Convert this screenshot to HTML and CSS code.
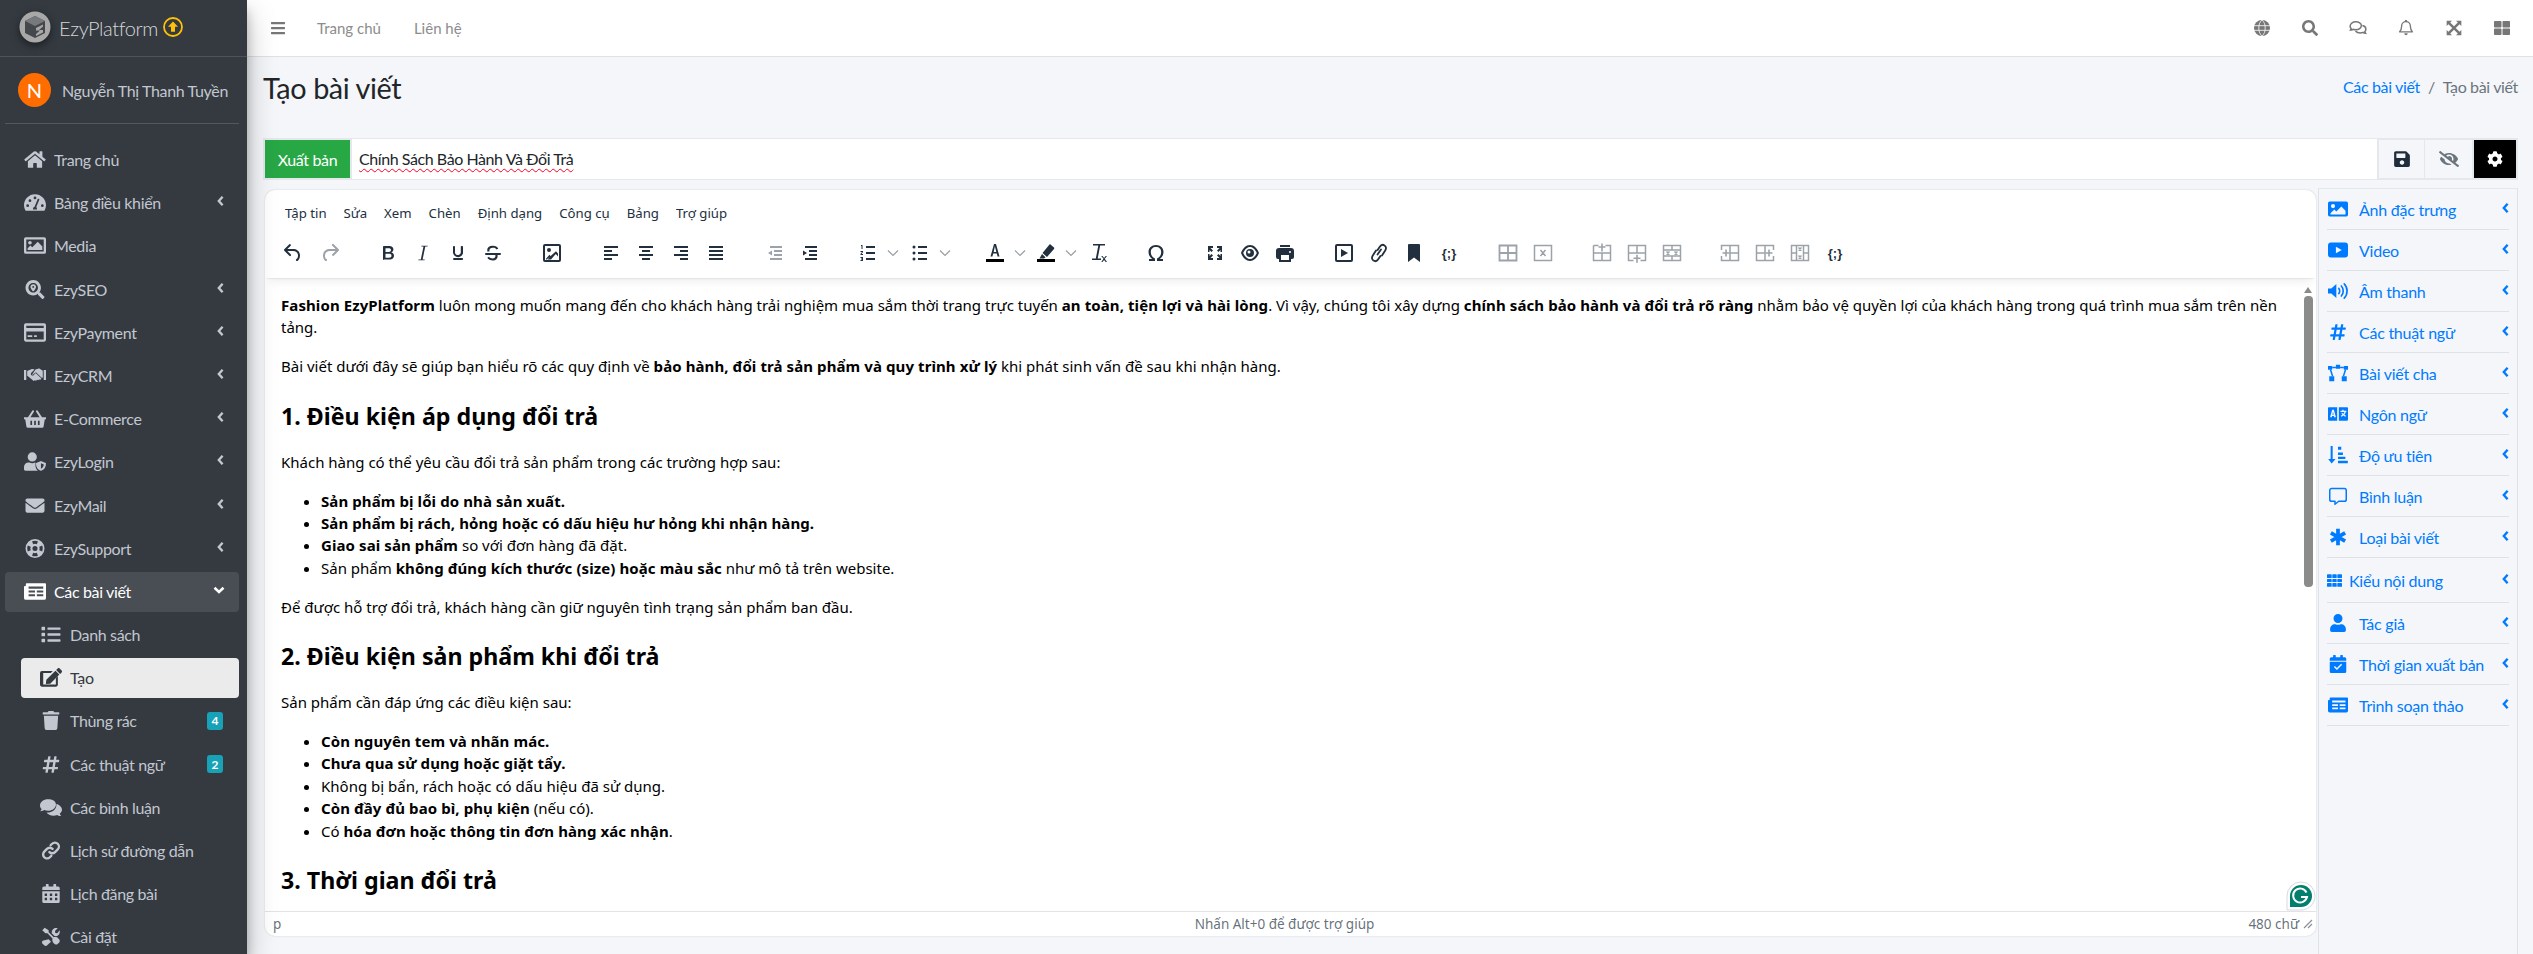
FILE: index.html
```html
<!DOCTYPE html>
<html lang="vi">
<head>
<meta charset="utf-8">
<title>Tạo bài viết</title>
<link rel="stylesheet" href="styles.css">
</head>
<body>
<svg class="sprite" xmlns="http://www.w3.org/2000/svg">
<symbol id="home" viewBox="0 0 576 512"><path d="M280.37 148.26L96 300.11V464a16 16 0 0 0 16 16l112.06-.29a16 16 0 0 0 15.92-16V368a16 16 0 0 1 16-16h64a16 16 0 0 1 16 16v95.64a16 16 0 0 0 16 16.05L464 480a16 16 0 0 0 16-16V300L295.67 148.26a12.19 12.19 0 0 0-15.3 0zM571.6 251.47L488 182.56V44.05a12 12 0 0 0-12-12h-56a12 12 0 0 0-12 12v72.61L318.47 43a48 48 0 0 0-61 0L4.34 251.47a12 12 0 0 0-1.6 16.9l25.5 31A12 12 0 0 0 45.15 301l235.22-193.74a12.19 12.19 0 0 1 15.3 0L530.9 301a12 12 0 0 0 16.9-1.6l25.5-31a12 12 0 0 0-1.7-16.93z"/></symbol>
<symbol id="search" viewBox="0 0 512 512"><path d="M505 442.7L405.3 343c-4.5-4.5-10.6-7-17-7H372c27.6-35.3 44-79.7 44-128C416 93.1 322.9 0 208 0S0 93.1 0 208s93.1 208 208 208c48.3 0 92.7-16.4 128-44v16.3c0 6.4 2.5 12.5 7 17l99.7 99.7c9.4 9.4 24.6 9.4 33.9 0l28.3-28.3c9.4-9.4 9.4-24.6.1-34zM208 336c-70.7 0-128-57.2-128-128 0-70.7 57.2-128 128-128 70.7 0 128 57.2 128 128 0 70.7-57.2 128-128 128z"/></symbol>
<symbol id="searchloc" viewBox="0 0 512 512"><path d="M505 442.7L405.3 343c-4.5-4.5-10.6-7-17-7H372c27.6-35.3 44-79.7 44-128C416 93.1 322.9 0 208 0S0 93.1 0 208s93.1 208 208 208c48.3 0 92.7-16.4 128-44v16.3c0 6.4 2.5 12.5 7 17l99.7 99.7c9.4 9.4 24.6 9.4 33.9 0l28.3-28.3c9.4-9.4 9.4-24.6.1-34zM208 336c-70.7 0-128-57.2-128-128 0-70.7 57.2-128 128-128 70.7 0 128 57.2 128 128 0 70.7-57.2 128-128 128z"/><path d="M208 112c-42 0-76 33-76 74 0 34 46 92 66 116 5 6 15 6 20 0 20-24 66-82 66-116 0-41-34-74-76-74zm0 100a26 26 0 1 1 0-52 26 26 0 0 1 0 52z"/></symbol>
<symbol id="envelope" viewBox="0 0 512 512"><path d="M502.3 190.8c3.9-3.1 9.7-.2 9.7 4.7V400c0 26.5-21.5 48-48 48H48c-26.5 0-48-21.5-48-48V195.6c0-5 5.7-7.8 9.7-4.7 22.4 17.4 52.1 39.5 154.1 113.6 21.1 15.4 56.7 47.8 92.2 47.6 35.7.3 72-32.8 92.3-47.6 102-74.1 131.6-96.3 154-113.7zM256 320c23.2.4 56.6-29.2 73.4-41.4 132.7-96.3 142.8-104.7 173.4-128.7 5.8-4.5 9.2-11.5 9.2-18.9v-19c0-26.5-21.5-48-48-48H48C21.5 64 0 85.5 0 112v19c0 7.4 3.4 14.3 9.2 18.9 30.6 23.9 40.7 32.4 173.4 128.7 16.8 12.2 50.2 41.8 73.4 41.4z"/></symbol>
<symbol id="hash" viewBox="0 0 448 512"><path d="M440.667 182.109l7.143-40c1.313-7.355-4.342-14.109-11.813-14.109h-74.81l14.623-81.891C377.123 38.754 371.468 32 363.997 32h-40.632a12 12 0 0 0-11.813 9.891L296.175 128H197.54l14.623-81.891C213.477 38.754 207.822 32 200.35 32h-40.632a12 12 0 0 0-11.813 9.891L132.528 128H53.432a12 12 0 0 0-11.813 9.891l-7.143 40C33.163 185.246 38.818 192 46.289 192h74.81L98.242 320H19.146a12 12 0 0 0-11.813 9.891l-7.143 40C-1.123 377.246 4.532 384 12.003 384h74.81L72.19 465.891C70.877 473.246 76.532 480 84.003 480h40.632a12 12 0 0 0 11.813-9.891L151.826 384h98.634l-14.623 81.891C234.523 473.246 240.178 480 247.65 480h40.632a12 12 0 0 0 11.813-9.891L315.472 384h79.096a12 12 0 0 0 11.813-9.891l7.143-40c1.313-7.355-4.342-14.109-11.813-14.109h-74.81l22.857-128h79.096a12 12 0 0 0 11.813-9.891zM261.889 320h-98.634l22.857-128h98.634l-22.857 128z"/></symbol>
<symbol id="user" viewBox="0 0 448 512"><path d="M224 256c70.7 0 128-57.3 128-128S294.7 0 224 0 96 57.3 96 128s57.3 128 128 128zm89.6 32h-16.7c-22.2 10.2-46.9 16-72.9 16s-50.6-5.8-72.9-16h-16.7C60.2 288 0 348.2 0 422.4V464c0 26.5 21.5 48 48 48h352c26.5 0 48-21.5 48-48v-41.6c0-74.2-60.2-134.4-134.4-134.4z"/></symbol>
<symbol id="trash" viewBox="0 0 448 512"><path d="M432 32H312l-9.4-18.7A24 24 0 0 0 281.1 0H166.8a23.72 23.72 0 0 0-21.4 13.3L136 32H16A16 16 0 0 0 0 48v32a16 16 0 0 0 16 16h416a16 16 0 0 0 16-16V48a16 16 0 0 0-16-16zM53.2 467a48 48 0 0 0 47.9 45h245.8a48 48 0 0 0 47.9-45L416 128H32z"/></symbol>
<symbol id="list" viewBox="0 0 512 512"><path d="M80 368H16a16 16 0 0 0-16 16v64a16 16 0 0 0 16 16h64a16 16 0 0 0 16-16v-64a16 16 0 0 0-16-16zm0-320H16A16 16 0 0 0 0 64v64a16 16 0 0 0 16 16h64a16 16 0 0 0 16-16V64a16 16 0 0 0-16-16zm0 160H16a16 16 0 0 0-16 16v64a16 16 0 0 0 16 16h64a16 16 0 0 0 16-16v-64a16 16 0 0 0-16-16zm416 176H176a16 16 0 0 0-16 16v32a16 16 0 0 0 16 16h320a16 16 0 0 0 16-16v-32a16 16 0 0 0-16-16zm0-320H176a16 16 0 0 0-16 16v32a16 16 0 0 0 16 16h320a16 16 0 0 0 16-16V80a16 16 0 0 0-16-16zm0 160H176a16 16 0 0 0-16 16v32a16 16 0 0 0 16 16h320a16 16 0 0 0 16-16v-32a16 16 0 0 0-16-16z"/></symbol>
<symbol id="thlarge" viewBox="0 0 512 512"><path d="M296 32h192c13.255 0 24 10.745 24 24v160c0 13.255-10.745 24-24 24H296c-13.255 0-24-10.745-24-24V56c0-13.255 10.745-24 24-24zm-80 0H24C10.745 32 0 42.745 0 56v160c0 13.255 10.745 24 24 24h192c13.255 0 24-10.745 24-24V56c0-13.255-10.745-24-24-24zM0 296v160c0 13.255 10.745 24 24 24h192c13.255 0 24-10.745 24-24V296c0-13.255-10.745-24-24-24H24c-13.255 0-24 10.745-24 24zm296 184h192c13.255 0 24-10.745 24-24V296c0-13.255-10.745-24-24-24H296c-13.255 0-24 10.745-24 24v160c0 13.255 10.745 24 24 24z"/></symbol>
<symbol id="bars" viewBox="0 0 448 512"><path d="M16 132h416c8.837 0 16-7.163 16-16V76c0-8.837-7.163-16-16-16H16C7.163 60 0 67.163 0 76v40c0 8.837 7.163 16 16 16zm0 160h416c8.837 0 16-7.163 16-16v-40c0-8.837-7.163-16-16-16H16c-8.837 0-16 7.163-16 16v40c0 8.837 7.163 16 16 16zm0 160h416c8.837 0 16-7.163 16-16v-40c0-8.837-7.163-16-16-16H16c-8.837 0-16 7.163-16 16v40c0 8.837 7.163 16 16 16z"/></symbol>
<symbol id="save" viewBox="0 0 448 512"><path d="M433.941 129.941l-83.882-83.882A48 48 0 0 0 316.118 32H48C21.49 32 0 53.49 0 80v352c0 26.51 21.49 48 48 48h352c26.51 0 48-21.49 48-48V163.882a48 48 0 0 0-14.059-33.941zM224 416c-35.346 0-64-28.654-64-64 0-35.346 28.654-64 64-64s64 28.654 64 64c0 35.346-28.654 64-64 64zm96-304.52V212c0 6.627-5.373 12-12 12H76c-6.627 0-12-5.373-12-12V108c0-6.627 5.373-12 12-12h228.52c3.183 0 6.235 1.264 8.485 3.515l3.48 3.48A11.996 11.996 0 0 1 320 111.48z"/></symbol>
<symbol id="cog" viewBox="0 0 512 512"><path d="M487.4 315.7l-42.6-24.6c4.3-23.2 4.3-47 0-70.2l42.6-24.6c4.9-2.8 7.1-8.6 5.5-14-11.1-35.6-30-67.8-54.7-94.6-3.8-4.1-10-5.1-14.8-2.3L380.8 110c-17.9-15.4-38.5-27.3-60.8-35.1V25.8c0-5.6-3.9-10.5-9.4-11.7-36.7-8.2-74.3-7.8-109.2 0-5.5 1.2-9.4 6.1-9.4 11.7V75c-22.2 7.9-42.8 19.8-60.8 35.1L88.7 85.5c-4.9-2.8-11-1.9-14.8 2.3-24.7 26.7-43.6 58.9-54.7 94.6-1.7 5.4.6 11.2 5.5 14L67.3 221c-4.3 23.2-4.3 47 0 70.2l-42.6 24.6c-4.9 2.8-7.1 8.6-5.5 14 11.1 35.6 30 67.8 54.7 94.6 3.8 4.1 10 5.1 14.8 2.3l42.6-24.6c17.9 15.4 38.5 27.3 60.8 35.1v49.2c0 5.6 3.9 10.5 9.4 11.7 36.7 8.2 74.3 7.8 109.2 0 5.5-1.2 9.4-6.1 9.4-11.7v-49.2c22.2-7.9 42.8-19.8 60.8-35.1l42.6 24.6c4.9 2.8 11 1.9 14.8-2.3 24.7-26.7 43.6-58.9 54.7-94.6 1.5-5.5-.7-11.3-5.6-14.1zM256 336c-44.1 0-80-35.9-80-80s35.9-80 80-80 80 35.9 80 80-35.9 80-80 80z"/></symbol>
<symbol id="eyeslash" viewBox="0 0 640 512"><path d="M320 400c-75.85 0-137.25-58.71-142.9-133.11L72.2 185.82c-13.79 17.3-26.48 35.59-36.72 55.59a32.35 32.35 0 0 0 0 29.19C89.71 376.41 197.07 448 320 448c26.91 0 52.87-4 77.89-10.46L346 397.39a144.13 144.13 0 0 1-26 2.61zm313.82 58.1l-110.55-85.44a331.25 331.25 0 0 0 81.25-102.07 32.35 32.35 0 0 0 0-29.19C550.29 135.59 442.93 64 320 64a308.15 308.15 0 0 0-147.32 37.7L45.46 3.37A16 16 0 0 0 23 6.18L3.37 31.45A16 16 0 0 0 6.18 53.9l588.36 454.73a16 16 0 0 0 22.46-2.81l19.64-25.27a16 16 0 0 0-2.82-22.45zm-183.72-142l-39.3-30.38A94.75 94.75 0 0 0 416 256a94.76 94.76 0 0 0-121.31-92.21A47.65 47.65 0 0 1 304 192a46.64 46.64 0 0 1-1.54 10l-73.61-56.89A142.31 142.31 0 0 1 320 112a143.92 143.92 0 0 1 144 144c0 21.63-5.29 41.79-13.9 60.11z"/></symbol>
<symbol id="gauge" viewBox="0 0 24 20"><path fill-rule="evenodd" d="M12 1C5.4 1 0 6.4 0 13c0 2 .5 3.800 1.400 5.400.3.400.8.600 1.300.600h18.600c.5 0 1-.2 1.300-.6C23.500 16.800 24 15 24 13c0-6.600-5.400-12-12-12zM12 3.500a1.500 1.500 0 1 1 0 3 1.500 1.500 0 0 1 0-3zM4 15a1.500 1.500 0 1 1 0-3 1.500 1.500 0 0 1 0 3zm2.500-5.500a1.500 1.500 0 1 1 0-3 1.500 1.500 0 0 1 0 3zM14.200 17.500H9.800a2.500 2.500 0 0 1 1.700-3L15 6.200c.3-.7 2 0 1.700.7l-3.300 8c.5.500.8 1.500.8 2.600zM20 15a1.500 1.500 0 1 1 0-3 1.500 1.500 0 0 1 0 3z"/></symbol>
<symbol id="media" viewBox="0 0 24 20"><path fill-rule="evenodd" d="M2 1h20a2 2 0 0 1 2 2v14a2 2 0 0 1-2 2H2a2 2 0 0 1-2-2V3a2 2 0 0 1 2-2zm.5 2.500v13h19v-13zM6.500 5a2 2 0 1 1 0 4 2 2 0 0 1 0-4zM4 15v-2l3-3 2 2 6-6 5 5v4z"/></symbol>
<symbol id="imagesolid" viewBox="0 0 24 20"><path fill-rule="evenodd" d="M2 1h20a2 2 0 0 1 2 2v14a2 2 0 0 1-2 2H2a2 2 0 0 1-2-2V3a2 2 0 0 1 2-2zM6 4a2.500 2.500 0 1 0 0 5 2.500 2.500 0 0 0 0-5zM3 16.500h18V12l-5-5-6 6-2.500-2.500L3 15z"/></symbol>
<symbol id="card" viewBox="0 0 24 20"><path fill-rule="evenodd" d="M2 0h20a2 2 0 0 1 2 2v16a2 2 0 0 1-2 2H2a2 2 0 0 1-2-2V2a2 2 0 0 1 2-2zm.5 2.500V5h19V2.500zm0 6.500v8.500h19V9zM4 13h5v2H4zm7 0h3v2h-3z"/></symbol>
<symbol id="handshake" viewBox="0 0 24 18"><path d="M0 3h2.500v11H0zM21.500 3H24v11h-2.500zM3.500 4l5-2c1-.4 2 0 3 .5L8 6c-.7.8-.6 2 .2 2.600.8.600 1.900.5 2.500-.2l2-2 6.300 6-1.500 1.500-1-.8-.8 1.200-1.500-.8-1 1.200-1.600-.6-1 .9L4 9.500H3.500zM12.500 2.500l2.800-1c.8-.2 1.600 0 2.200.4l3 2v7.600h-1.200L13 5.500l-3.500 2.800c-.4.300-.8 0-.6-.4z"/></symbol>
<symbol id="basket" viewBox="0 0 24 20"><path fill-rule="evenodd" d="M0 8.500h4.300L9 1.500c.4-.5 1-.6 1.500-.3.500.4.600 1 .3 1.500L7 8.500h10l-3.800-5.800c-.3-.5-.2-1.100.3-1.500.5-.3 1.100-.2 1.500.3l4.700 7H24V10a1 1 0 0 1-1 1h-.4l-1.200 7.700a1.500 1.500 0 0 1-1.500 1.300H4.100a1.500 1.500 0 0 1-1.500-1.300L1.400 11H1a1 1 0 0 1-1-1zM7 12.500v4.500h1.800v-4.500zm4.100 0v4.500h1.800v-4.500zm4.100 0v4.500H17v-4.500z"/></symbol>
<symbol id="usershield" viewBox="0 0 24 20"><path d="M9 0a5 5 0 1 1 0 10A5 5 0 0 1 9 0zM1.500 20c-.8 0-1.500-.7-1.500-1.500V16c0-2.800 2.200-5 5-5h.8c1 .5 2.100.8 3.200.8s2.200-.3 3.200-.8h.3v3c0 2.500 1 4.500 2.600 6z"/><path fill-rule="evenodd" d="M18.500 9.500l5.200 2.100c.2.100.3.300.3.500 0 3.800-2 7-5.300 8-.1 0-.3 0-.4 0-3.300-1-5.300-4.200-5.300-8 0-.2.100-.4.300-.5zm0 2.500v6c1.800-.8 3-2.700 3.100-4.700z"/></symbol>
<symbol id="lifering" viewBox="0 0 24 24"><path fill-rule="evenodd" d="M12 0a12 12 0 1 1 0 24A12 12 0 0 1 12 0zM8.300 2.800l1.400 3.800a5.500 5.500 0 0 1 4.600 0l1.400-3.800a10 10 0 0 0-7.400 0zM2.800 8.300a10 10 0 0 0 0 7.400l3.800-1.400a5.500 5.500 0 0 1 0-4.600zM21.200 8.300l-3.800 1.400a5.500 5.500 0 0 1 0 4.600l3.800 1.400a10 10 0 0 0 0-7.400zM9.700 17.400l-1.400 3.800a10 10 0 0 0 7.400 0l-1.400-3.800a5.500 5.500 0 0 1-4.600 0zM12 8.800a3.200 3.200 0 1 0 0 6.400 3.200 3.200 0 0 0 0-6.400z"/></symbol>
<symbol id="newspaper" viewBox="0 0 24 18"><path fill-rule="evenodd" d="M3 0h20a1 1 0 0 1 1 1v15a2 2 0 0 1-2 2H2a2 2 0 0 1-2-2V4a1 1 0 0 1 1-1h1V1a1 1 0 0 1 1-1zM5 3.500V6h16V3.500zM5 8v2.200h7V8zm9 0v2.200h7V8zM5 12v2.200h7V12zm9 0v2.200h7V12z"/></symbol>
<symbol id="edit" viewBox="0 0 24 20"><path d="M16.800 2.500l4.300 4.300-9.900 9.900-4.800.5.500-4.800zM22 .8l1.600 1.600c.6.600.6 1.500 0 2.100l-1.700 1.700-4.300-4.300L19.300.2c.6-.6 1.500-.6 2.100 0z"/><path d="M2 3h12l-2.200 2.200H3.500V17.500h13.800v-7l2.200-2.200V18a2 2 0 0 1-2 2H2a2 2 0 0 1-2-2V5a2 2 0 0 1 2-2z"/></symbol>
<symbol id="comments" viewBox="0 0 24 20"><path d="M8.700 1C3.900 1 0 4 0 7.700c0 1.500.6 2.800 1.700 3.900-.5 1.400-1.600 2.500-1.600 2.500 2 .1 3.600-.7 4.400-1.300 1.300.5 2.700.8 4.200.8 4.800 0 8.700-3 8.700-6.900S13.500 1 8.700 1z"/><path d="M22.300 16.500c1-1 1.700-2.300 1.700-3.800 0-2.800-2.700-5.200-6.200-6.100 0 .4.100.7.100 1.100 0 4.700-4.500 8.300-9.800 8.300h-1c1.400 2 4.300 3.400 7.500 3.400 1.500 0 2.900-.3 4.200-.8.800.6 2.400 1.400 4.400 1.300 0 0-1.100-1.100-1.600-2.500z" transform="translate(0 -.5)"/></symbol>
<symbol id="commentsline" viewBox="0 0 24 20"><path fill="none" stroke="currentColor" stroke-width="2" d="M9 1.800C4.900 1.800 1.500 4.300 1.500 7.500c0 1.300.6 2.500 1.500 3.400-.3.900-1 1.800-1 1.800 1.400 0 2.600-.5 3.300-1 1.200.5 2.400.7 3.700.7 4.100 0 7.500-2.500 7.500-5.600S13.100 1.800 9 1.800z"/><path fill="none" stroke="currentColor" stroke-width="2" d="M17.900 6.800c2.700.6 4.600 2.600 4.600 4.900 0 1.300-.6 2.500-1.500 3.400.3.900 1 1.800 1 1.800-1.400 0-2.600-.5-3.300-1-1.200.5-2.400.7-3.700.7-2.700 0-5-1-6.300-2.700"/></symbol>
<symbol id="link" viewBox="0 0 24 24"><path fill="none" stroke="currentColor" stroke-width="3" stroke-linecap="round" d="M10 14a5 5 0 0 0 7.100 0l3.400-3.400a5 5 0 0 0-7.100-7.100L11.500 5.400M14 10a5 5 0 0 0-7.100 0l-3.400 3.400a5 5 0 0 0 7.100 7.100l1.900-1.900"/></symbol>
<symbol id="calendar" viewBox="0 0 22 24"><path fill-rule="evenodd" d="M0 9h22v13a2 2 0 0 1-2 2H2a2 2 0 0 1-2-2zm3 3v3h3v-3zm6.500 0v3h3v-3zM16 12v3h3v-3zM3 17.500v3h3v-3zm6.500 0v3h3v-3zm6.500 0v3h3v-3z"/><path d="M5 0h2.500a.5.500 0 0 1 .5.500V3h6V.5a.5.500 0 0 1 .5-.5H17a.5.500 0 0 1 .5.500V3H20a2 2 0 0 1 2 2v2.500H0V5a2 2 0 0 1 2-2h2.500V.5A.5.500 0 0 1 5 0z"/></symbol>
<symbol id="calcheck" viewBox="0 0 22 24"><path fill-rule="evenodd" d="M0 9h22v13a2 2 0 0 1-2 2H2a2 2 0 0 1-2-2zm16.500 4l-1.400-1.400-5.600 5.600-2.600-2.600L5.500 16l4 4z"/><path d="M5 0h2.500a.5.500 0 0 1 .5.500V3h6V.5a.5.500 0 0 1 .5-.5H17a.5.500 0 0 1 .5.500V3H20a2 2 0 0 1 2 2v2.500H0V5a2 2 0 0 1 2-2h2.500V.5A.5.500 0 0 1 5 0z"/></symbol>
<symbol id="tools" viewBox="0 0 24 24"><path d="M1 4l3-3 5 3v2.500l6.500 6.500c2-.7 4.300-.2 5.800 1.400l1.400 1.800c.6 1 .5 2.400-.3 3.300l-2 2c-1 .9-2.400.9-3.300.3l-1.800-1.400c-1.500-1.500-2-3.800-1.400-5.800L7.500 8H5z"/><path d="M9 15.500l3 3-4.800 4.700c-1 1-2.800 1-3.800 0l-2-1.900c-1-1-1-2.700 0-3.800zM22.800 4c.7 2 .3 4.400-1.300 6-1.400 1.400-3.300 1.900-5.100 1.500L13 8c-.4-1.800.1-3.700 1.500-5.100 1.600-1.600 4-2 6-1.300L17 5l.5 2.500L20 8z"/></symbol>
<symbol id="globe" viewBox="0 0 24 24"><path d="M12 0a12 12 0 1 1 0 24 12 12 0 0 1 0-24z"/><path stroke="#fff" stroke-width="1.200" fill="none" d="M0 8.500h24M0 15.500h24M12 0c-3.500 3-4.800 7-4.800 12s1.300 9 4.800 12c3.500-3 4.800-7 4.800-12S15.500 3 12 0z"/></symbol>
<symbol id="bell" viewBox="0 0 22 24"><path fill="none" stroke="currentColor" stroke-width="2" stroke-linejoin="round" d="M11 2.500c-3.800 0-6.500 3-6.500 6.500 0 5-1.200 6.700-3.200 8.800h19.400c-2-2.100-3.200-3.800-3.200-8.800 0-3.500-2.700-6.500-6.500-6.500z"/><path d="M9.500 0h3v3h-3zM8.500 20h5c0 1.800-1 3-2.500 3s-2.500-1.200-2.500-3z"/></symbol>
<symbol id="expand" viewBox="0 0 24 24"><path d="M1 1h8L6.300 3.700 12 9.400l5.700-5.700L15 1h8v8l-2.700-2.700-5.700 5.700 5.700 5.700L23 15v8h-8l2.700-2.700-5.700-5.700-5.700 5.700L9 23H1v-8l2.700 2.700L9.400 12 3.700 6.300 1 9z"/></symbol>
<symbol id="youtube" viewBox="0 0 24 18"><path fill-rule="evenodd" d="M3.500 0h17A3.500 3.500 0 0 1 24 3.500v11a3.500 3.500 0 0 1-3.500 3.500h-17A3.500 3.500 0 0 1 0 14.500v-11A3.500 3.500 0 0 1 3.500 0zM9.500 5v8l7-4z"/></symbol>
<symbol id="volume" viewBox="0 0 24 20"><path d="M0 7h4l6-5.500v17L4 13H0z"/><path fill="none" stroke="currentColor" stroke-width="2" stroke-linecap="round" d="M13 7c1.300 1.500 1.300 4.500 0 6M16 4c3 3 3 9 0 12M19.500 1.500c4.500 4.500 4.500 12.500 0 17"/></symbol>
<symbol id="diagram" viewBox="0 0 24 20"><path d="M9.500 0h5v5h-5zM0 1.500h5v4.500H0zM19 1.500h5v4.500h-5zM1.500 14h6v6h-6zM16.500 14h6v6h-6z"/><path fill="none" stroke="currentColor" stroke-width="1.800" d="M5 3.500h4.500M14.500 3.500H19M3 6l2.500 8M21 6l-2.500 8"/></symbol>
<symbol id="language" viewBox="0 0 24 16"><path fill-rule="evenodd" d="M1 0h10v16H1a1 1 0 0 1-1-1V1a1 1 0 0 1 1-1zm4 3L2.500 12h2l.4-1.500h2.200L7.500 12h2L7 3zm.2 6L6 5.500 6.800 9zM13 0h10a1 1 0 0 1 1 1v14a1 1 0 0 1-1 1H13zm4.200 3v1.200H15v1.500h4.800c-.3 1-.9 1.800-1.400 2.300-.4-.4-.7-.8-.9-1.200h-1.500c.3.700.8 1.400 1.300 2-.6.400-1.200.7-1.900 1l.5 1.400c.9-.3 1.800-.8 2.600-1.400.7.600 1.600 1 2.500 1.400l.5-1.400c-.7-.2-1.400-.6-1.900-1 .9-.9 1.500-2 1.800-3.100H22V4.200h-3.300V3z"/></symbol>
<symbol id="sort" viewBox="0 0 24 22"><path d="M3 0h2.500v16H9l-4.700 5.500L0 16h3zM12 1h4v3.500h-4zM12 8h6v3h-6zM12 13h9v3h-9zM12 18h12v3H12z"/></symbol>
<symbol id="comment" viewBox="0 0 24 24"><path fill="none" stroke="currentColor" stroke-width="2" stroke-linejoin="round" d="M3.500 2h17A2.500 2.500 0 0 1 23 4.500v12a2.500 2.500 0 0 1-2.500 2.500H13l-5 4v-4H3.500A2.500 2.500 0 0 1 1 16.500v-12A2.500 2.500 0 0 1 3.500 2z"/></symbol>
<symbol id="asterisk" viewBox="0 0 24 24"><path fill="none" stroke="currentColor" stroke-width="5" d="M12 1v22M2.500 6.500l19 11M21.500 6.500l-19 11"/></symbol>
<symbol id="th" viewBox="0 0 24 24"><path d="M1 2h5.500a1 1 0 0 1 1 1v4a1 1 0 0 1-1 1H1a1 1 0 0 1-1-1V3a1 1 0 0 1 1-1zm8.500 0h5a1 1 0 0 1 1 1v4a1 1 0 0 1-1 1h-5a1 1 0 0 1-1-1V3a1 1 0 0 1 1-1zm8 0H23a1 1 0 0 1 1 1v4a1 1 0 0 1-1 1h-5.500a1 1 0 0 1-1-1V3a1 1 0 0 1 1-1zM1 9.500h5.500a1 1 0 0 1 1 1v3a1 1 0 0 1-1 1H1a1 1 0 0 1-1-1v-3a1 1 0 0 1 1-1zm8.500 0h5a1 1 0 0 1 1 1v3a1 1 0 0 1-1 1h-5a1 1 0 0 1-1-1v-3a1 1 0 0 1 1-1zm8 0H23a1 1 0 0 1 1 1v3a1 1 0 0 1-1 1h-5.500a1 1 0 0 1-1-1v-3a1 1 0 0 1 1-1zM1 16h5.500a1 1 0 0 1 1 1v4a1 1 0 0 1-1 1H1a1 1 0 0 1-1-1v-4a1 1 0 0 1 1-1zm8.500 0h5a1 1 0 0 1 1 1v4a1 1 0 0 1-1 1h-5a1 1 0 0 1-1-1v-4a1 1 0 0 1 1-1zm8 0H23a1 1 0 0 1 1 1v4a1 1 0 0 1-1 1h-5.500a1 1 0 0 1-1-1v-4a1 1 0 0 1 1-1z"/></symbol>
<symbol id="angleleft" viewBox="0 0 10 16"><path fill="none" stroke="currentColor" stroke-width="3.400" d="M8 2L2.600 8 8 14"/></symbol>
<symbol id="angledown" viewBox="0 0 16 10"><path fill="none" stroke="currentColor" stroke-width="3.400" d="M2 2l6 5.600L14 2"/></symbol>
<symbol id="t-undo" viewBox="0 0 24 24"><path d="M6.400 8H12c3.700 0 6.200 2 6.800 5.100.6 2.700-.4 5.600-2.300 6.800a1 1 0 0 1-1-1.800c1.100-.6 1.800-2.700 1.400-4.600-.5-2.100-2.100-3.500-4.900-3.500H6.400l3.300 3.300a1 1 0 1 1-1.400 1.400l-5-5a1 1 0 0 1 0-1.400l5-5a1 1 0 0 1 1.400 1.400L6.400 8z"/></symbol>
<symbol id="t-redo" viewBox="0 0 24 24"><path d="M17.600 10H12c-2.800 0-4.400 1.400-4.900 3.500-.4 2 .3 4 1.400 4.600a1 1 0 1 1-1 1.800c-2-1.200-2.900-4.100-2.300-6.800C5.800 10 8.300 8 12 8h5.600l-3.300-3.300a1 1 0 1 1 1.400-1.400l5 5a1 1 0 0 1 0 1.400l-5 5a1 1 0 0 1-1.400-1.400l3.300-3.300z"/></symbol>
<symbol id="t-bold" viewBox="0 0 24 24"><path fill-rule="evenodd" d="M7.800 19c-.3 0-.5 0-.6-.2l-.2-.5V5.700c0-.2 0-.4.200-.5l.6-.2h5c1.500 0 2.700.3 3.500 1 .7.600 1.100 1.400 1.100 2.500a3 3 0 0 1-.6 1.800c-.4.600-1 1-1.600 1.200.9.100 1.500.5 2 1.100.5.600.8 1.300.8 2.100 0 1.200-.4 2.100-1.200 2.800-.8.600-2 1-3.600 1H7.800zm4.700-8.100c1.700 0 2.500-.6 2.500-1.900 0-1.200-.8-1.800-2.500-1.800H9.500v3.700h3zm.4 5.900c1.800 0 2.600-.7 2.600-2 0-1.400-.9-2-2.600-2H9.500v4h3.400z"/></symbol>
<symbol id="t-italic" viewBox="0 0 24 24"><path d="M16.700 4.700l-.1.900h-2.300l-2.700 12.800h2.200l-.2.900H7.300l.2-.9h2.300l2.700-12.800h-2.200l.1-.9z"/></symbol>
<symbol id="t-under" viewBox="0 0 24 24"><path d="M16 5c.6 0 1 .4 1 1v5.500a4 4 0 0 1-.4 1.800l-1 1.400a5.300 5.300 0 0 1-5.500 1 4.500 4.500 0 0 1-2.500-2.400 4.300 4.300 0 0 1-.6-1.800V6c0-.6.400-1 1-1s1 .4 1 1v5.500c0 .3 0 .6.200 1a3 3 0 0 0 2.800 1.500c.4 0 .7 0 1-.2a3 3 0 0 0 1.800-2.300V6c0-.6.400-1 1-1zM8 17h8c.6 0 1 .4 1 1s-.4 1-1 1H8a1 1 0 0 1 0-2z"/></symbol>
<symbol id="t-strike" viewBox="0 0 24 24"><path d="M15.600 8.500c-.5-.7-1-1.100-1.300-1.300-.6-.4-1.300-.5-2.200-.5-2.700-.1-4.200 1.400-3.600 3.800H6.400c-.8-3.600 1.400-6 5.700-5.800 1.300 0 2.300.3 3.200.8.900.6 1.600 1.300 2 2l-1.700 1zM19 12a1 1 0 0 1 0 2h-2.500c.7 3.300-1.500 5.500-4.600 5.400-1.300 0-2.400-.2-3.300-.7a6 6 0 0 1-2.300-2l1.700-1c.3.500.8 1 1.500 1.300.6.300 1.300.4 2 .4 2.200 0 3.400-1.600 2.800-3.400H5a1 1 0 0 1 0-2z"/></symbol>
<symbol id="t-image" viewBox="0 0 24 24"><path fill-rule="evenodd" d="M5 3h14a2 2 0 0 1 2 2v14a2 2 0 0 1-2 2H5a2 2 0 0 1-2-2V5a2 2 0 0 1 2-2zm0 2v14h14V5zm4 2a2 2 0 1 1 0 4 2 2 0 0 1 0-4zm7 3.300l2 2.300v2.800l-2.200-2.500-4.800 5.600H6.700zm-6.500 3.400l1 1.200-3 3.500H6v-.6z"/></symbol>
<symbol id="t-al" viewBox="0 0 24 24"><path d="M5 5h14v2H5zM5 9h8v2H5zM5 13h14v2H5zM5 17h8v2H5z"/></symbol>
<symbol id="t-ac" viewBox="0 0 24 24"><path d="M5 5h14v2H5zM8 9h8v2H8zM5 13h14v2H5zM8 17h8v2H8z"/></symbol>
<symbol id="t-ar" viewBox="0 0 24 24"><path d="M5 5h14v2H5zM11 9h8v2h-8zM5 13h14v2H5zM11 17h8v2h-8z"/></symbol>
<symbol id="t-aj" viewBox="0 0 24 24"><path d="M5 5h14v2H5zM5 9h14v2H5zM5 13h14v2H5zM5 17h14v2H5z"/></symbol>
<symbol id="t-out" viewBox="0 0 24 24"><path d="M7 5h12v2H7zM11 9h8v2h-8zM11 13h8v2h-8zM7 17h12v2H7zM9 9.500v5L5 12z"/></symbol>
<symbol id="t-in" viewBox="0 0 24 24"><path d="M7 5h12v2H7zM11 9h8v2h-8zM11 13h8v2h-8zM7 17h12v2H7zM5 9.500v5L9 12z"/></symbol>
<symbol id="t-num" viewBox="0 0 24 24"><path d="M10 5h9v2h-9zM10 11h9v2h-9zM10 17h9v2h-9zM5 4h1.500v4H5.500V5H5zM4.500 10h2.500v1L5.500 13H7v1H4.500v-1L6 11H4.500zM4.500 16H7v4H4.500v-1H6v-.5H5v-.9h1V17H4.500z"/></symbol>
<symbol id="t-bul" viewBox="0 0 24 24"><path d="M10 5h9v2h-9zM10 11h9v2h-9zM10 17h9v2h-9z"/><circle cx="6" cy="6" r="1.500"/><circle cx="6" cy="12" r="1.500"/><circle cx="6" cy="18" r="1.500"/></symbol>
<symbol id="t-chev" viewBox="0 0 12 12"><path fill="none" stroke="currentColor" stroke-width="1.200" d="M1 3.500l5 5 5-5"/></symbol>
<symbol id="t-color" viewBox="0 0 24 24"><path d="M3 18h18v3H3z" fill="#000"/><path fill-rule="evenodd" d="M11 3h2l3.500 12.500h-1.900l-.8-3H10.200l-.8 3H7.500zm.9 2.200L10.700 11h2.600z"/></symbol>
<symbol id="t-high" viewBox="0 0 24 24"><path d="M3 18h18v3H3z" fill="#000"/><path d="M16.500 3.500l3.500 3c.4.400.4 1 0 1.400l-7 8.100-4.500-4 7-8.400c.4-.4 1-.5 1-.1zM8 13l3.500 3.200-1.400 1.300H5.500z"/></symbol>
<symbol id="t-clear" viewBox="0 0 24 24"><path d="M6 3h12v1.500h-4.800l-2.500 13H14V19H5v-1.500h3.800l2.500-13H6zM15.500 15l1.600 1.900L18.700 15H20l-2.300 2.800L20 21h-1.300l-1.600-2.100-1.600 2.100h-1.200l2.200-3.200L14.200 15z"/></symbol>
<symbol id="t-omega" viewBox="0 0 24 24"><path d="M12 4c4.500 0 7.500 3 7.500 7 0 3-1.500 5.500-3.800 7H19v2h-6v-2.500c2.500-1 4.200-3.500 4.200-6.500 0-3-2-5-5.200-5s-5.200 2-5.200 5c0 3 1.700 5.500 4.200 6.500V20H5v-2h3.300c-2.300-1.500-3.800-4-3.800-7 0-4 3-7 7.500-7z"/></symbol>
<symbol id="t-full" viewBox="0 0 24 24"><path d="M5 5h5v2H7.500l2.500 2.500L8.500 11 6.500 9v2H5zM19 5v6h-1.500V9l-2 2L14 9.500 16.500 7H14V5zM5 19v-6h1.500v2l2-2 1.500 1.500L7.500 17H10v2zM19 19h-5v-2h2.500L14 14.500l1.500-1.500 2 2v-2H19z"/></symbol>
<symbol id="t-prev" viewBox="0 0 24 24"><path fill-rule="evenodd" d="M12 4c4 0 7.300 3.500 9 8-1.700 4.500-5 8-9 8s-7.300-3.500-9-8c1.700-4.500 5-8 9-8zm0 2c-2.800 0-5.300 2.600-6.800 6 1.500 3.400 4 6 6.800 6s5.300-2.600 6.800-6c-1.500-3.400-4-6-6.800-6zm0 2a4 4 0 1 1 0 8 4 4 0 0 1 0-8zm-1 1.500a1.500 1.500 0 0 0 0 3 1.500 1.500 0 0 0 0-3z"/></symbol>
<symbol id="t-print" viewBox="0 0 24 24"><path fill-rule="evenodd" d="M7 4h10v2H7zM6 7h12a3 3 0 0 1 3 3v6a2 2 0 0 1-2 2h-1v3H6v-3H5a2 2 0 0 1-2-2v-6a3 3 0 0 1 3-3zm2 7v5h8v-5zm9-4a1 1 0 1 0 0 2 1 1 0 0 0 0-2z"/></symbol>
<symbol id="t-media" viewBox="0 0 24 24"><path fill-rule="evenodd" d="M5 3h14a2 2 0 0 1 2 2v14a2 2 0 0 1-2 2H5a2 2 0 0 1-2-2V5a2 2 0 0 1 2-2zm0 2v14h14V5zm4 3l7 4-7 4z"/></symbol>
<symbol id="t-link" viewBox="0 0 24 24"><path fill="none" stroke="currentColor" stroke-width="1.800" stroke-linecap="round" d="M10.500 13.500L14 8.500M9 9.500l-3.200 5c-1.300 2-1 4 .7 5.100s3.600.5 4.900-1.500l2-3.100M15 14.500l3.200-5c1.300-2 1-4-.7-5.100s-3.600-.5-4.900 1.500l-2 3.100"/></symbol>
<symbol id="t-mark" viewBox="0 0 24 24"><path d="M7 3h10a1 1 0 0 1 1 1v17l-6-4.500L6 21V4a1 1 0 0 1 1-1z"/></symbol>
<symbol id="t-code" viewBox="0 0 24 24"><text x="12" y="16.500" text-anchor="middle" font-family="'Liberation Sans',sans-serif" font-size="13" font-weight="700">{;}</text></symbol>
<symbol id="t-tbl" viewBox="0 0 24 24"><path fill="none" stroke="currentColor" stroke-width="1.800" d="M3.500 4.500h17v15h-17zM12 4.500v15M3.500 12h17"/></symbol>
<symbol id="t-tdel" viewBox="0 0 24 24"><path fill="none" stroke="currentColor" stroke-width="1.500" d="M3.500 4.500h17v15h-17zM9.500 9l5 6M14.500 9l-5 6"/></symbol>
<symbol id="t-rup" viewBox="0 0 24 24"><path fill="none" stroke="currentColor" stroke-width="1.500" d="M3.500 4.500h5M15.500 4.500h5v15h-17v-15M12 12v7.500M3.500 12h17"/><path d="M11.200 2.500h1.600v2.700h2.700v1.600h-2.700v3.700h-1.600V6.800H8.500V5.200h2.700z"/></symbol>
<symbol id="t-rdn" viewBox="0 0 24 24"><path fill="none" stroke="currentColor" stroke-width="1.500" d="M8.500 19.500h-5v-15h17v15h-5M12 4.500V12M3.500 12h17"/><path d="M11.200 13.800h1.600v2.700h2.700v1.600h-2.700v3.700h-1.600v-3.700H8.500v-1.600h2.700z"/></symbol>
<symbol id="t-rdel" viewBox="0 0 24 24"><path fill="none" stroke="currentColor" stroke-width="1.500" d="M3.500 4.500h17v15h-17zM3.500 9h17M3.500 15h17M6.500 10.500l3 3M9.500 10.500l-3 3M14.500 10.500l3 3M17.500 10.500l-3 3M12 4.500V9M12 15v4.500"/></symbol>
<symbol id="t-cl" viewBox="0 0 24 24"><path fill="none" stroke="currentColor" stroke-width="1.500" d="M3.500 9V4.500h17v15h-17V15M12 4.500v15M12 12h8.500"/><path d="M7.200 8.500h1.600v2.700h2.700v1.600H8.800v2.700H7.200v-2.700H4.500v-1.600h2.700z"/></symbol>
<symbol id="t-cr" viewBox="0 0 24 24"><path fill="none" stroke="currentColor" stroke-width="1.500" d="M20.500 9V4.500h-17v15h17V15M12 4.500v15M3.500 12H12"/><path d="M15.200 8.500h1.600v2.700h2.700v1.600h-2.700v2.700h-1.600v-2.700h-2.700v-1.600h2.700z"/></symbol>
<symbol id="t-cdel" viewBox="0 0 24 24"><path fill="none" stroke="currentColor" stroke-width="1.500" d="M3.500 4.500h17v15h-17zM8.500 4.500v15M15.500 4.500v15M3.500 12h5M15.500 12h5M10.500 6.500l3 3M13.500 6.500l-3 3M10.500 14.500l3 3M13.500 14.500l-3 3"/></symbol>
</svg>

<div class="app">
  <aside class="sidebar">
    <div class="brand">
      <svg class="logo" viewBox="0 0 32 32"><circle cx="16" cy="16" r="15.500" fill="#a8a8a8"/><path d="M16 5l10 5v12l-10 5-10-5V10z" fill="#44474b"/><path d="M16 5l10 5-10 5-10-5z" fill="#77797c"/><path d="M17 17l7-3.500v2l-4 3.500h4v2.500l-7 3.500v-2l4-3.500h-4z" fill="#a8a8a8"/></svg>
      <span class="brand-text">EzyPlatform</span>
      <svg class="brand-up" viewBox="0 0 20 20"><circle cx="10" cy="10" r="9" fill="none" stroke="#ffc107" stroke-width="1.800"/><path d="M10 4.500l5 5.200h-3v5H8v-5H5z" fill="#ffc107"/></svg>
    </div>
    <div class="user-panel">
      <span class="avatar">N</span>
      <span class="user-name">Nguyễn Thị Thanh Tuyền</span>
    </div>
    <nav class="nav">
      <a class="nav-link"><span class="nav-ic"><svg><use href="#home"/></svg></span>Trang chủ</a>
      <a class="nav-link"><span class="nav-ic"><svg><use href="#gauge"/></svg></span>Bảng điều khiển<svg class="caret"><use href="#angleleft"/></svg></a>
      <a class="nav-link"><span class="nav-ic"><svg><use href="#media"/></svg></span>Media</a>
      <a class="nav-link"><span class="nav-ic"><svg><use href="#searchloc"/></svg></span>EzySEO<svg class="caret"><use href="#angleleft"/></svg></a>
      <a class="nav-link"><span class="nav-ic"><svg><use href="#card"/></svg></span>EzyPayment<svg class="caret"><use href="#angleleft"/></svg></a>
      <a class="nav-link"><span class="nav-ic"><svg><use href="#handshake"/></svg></span>EzyCRM<svg class="caret"><use href="#angleleft"/></svg></a>
      <a class="nav-link"><span class="nav-ic"><svg><use href="#basket"/></svg></span>E-Commerce<svg class="caret"><use href="#angleleft"/></svg></a>
      <a class="nav-link"><span class="nav-ic"><svg><use href="#usershield"/></svg></span>EzyLogin<svg class="caret"><use href="#angleleft"/></svg></a>
      <a class="nav-link"><span class="nav-ic"><svg><use href="#envelope"/></svg></span>EzyMail<svg class="caret"><use href="#angleleft"/></svg></a>
      <a class="nav-link"><span class="nav-ic"><svg><use href="#lifering"/></svg></span>EzySupport<svg class="caret"><use href="#angleleft"/></svg></a>
      <a class="nav-link open"><span class="nav-ic"><svg><use href="#newspaper"/></svg></span>Các bài viết<svg class="caret-down"><use href="#angledown"/></svg></a>
      <a class="nav-link sub"><span class="nav-ic"><svg><use href="#list"/></svg></span>Danh sách</a>
      <a class="nav-link sub current"><span class="nav-ic"><svg><use href="#edit"/></svg></span>Tạo</a>
      <a class="nav-link sub"><span class="nav-ic"><svg><use href="#trash"/></svg></span>Thùng rác<span class="badge">4</span></a>
      <a class="nav-link sub"><span class="nav-ic"><svg><use href="#hash"/></svg></span>Các thuật ngữ<span class="badge">2</span></a>
      <a class="nav-link sub"><span class="nav-ic"><svg><use href="#comments"/></svg></span>Các bình luận</a>
      <a class="nav-link sub"><span class="nav-ic"><svg><use href="#link"/></svg></span>Lịch sử đường dẫn</a>
      <a class="nav-link sub"><span class="nav-ic"><svg><use href="#calendar"/></svg></span>Lịch đăng bài</a>
      <a class="nav-link sub"><span class="nav-ic"><svg><use href="#tools"/></svg></span>Cài đặt</a>
    </nav>
  </aside>

  <main class="main">
    <header class="topbar">
      <svg class="top-bars"><use href="#bars"/></svg>
      <a class="top-link first">Trang chủ</a>
      <a class="top-link">Liên hệ</a>
      <div class="top-icons">
        <svg><use href="#globe"/></svg>
        <svg><use href="#search"/></svg>
        <svg class="wide"><use href="#commentsline"/></svg>
        <svg><use href="#bell"/></svg>
        <svg><use href="#expand"/></svg>
        <svg><use href="#thlarge"/></svg>
      </div>
    </header>

    <section class="content">
      <div class="page-head">
        <h1 class="page-title">Tạo bài viết</h1>
        <div class="crumbs"><a class="crumb-link">Các bài viết</a><span class="crumb-sep">/</span><span>Tạo bài viết</span></div>
      </div>

      <div class="title-bar">
        <button class="publish">Xuất bản</button>
        <div class="title-input"><span class="misspelt">Chính Sách Bảo Hành Và Đổi Trả</span></div>
        <button class="tool-btn save"><svg><use href="#save"/></svg></button>
        <button class="tool-btn eye"><svg><use href="#eyeslash"/></svg></button>
        <button class="tool-btn gear"><svg><use href="#cog"/></svg></button>
      </div>

      <div class="work">
        <div class="editor">
          <div class="ed-head">
            <div class="menubar">
              <span class="mi">Tập tin</span><span class="mi">Sửa</span><span class="mi">Xem</span><span class="mi">Chèn</span><span class="mi">Định dạng</span><span class="mi">Công cụ</span><span class="mi">Bảng</span><span class="mi">Trợ giúp</span>
            </div>
            <div class="toolbar">
              <span class="tb"><svg><use href="#t-undo"/></svg></span>
              <span class="tb off g2"><svg><use href="#t-redo"/></svg></span>
              <span class="tb g23"><svg><use href="#t-bold"/></svg></span>
              <span class="tb"><svg><use href="#t-italic"/></svg></span>
              <span class="tb"><svg><use href="#t-under"/></svg></span>
              <span class="tb"><svg><use href="#t-strike"/></svg></span>
              <span class="tb g24"><svg><use href="#t-image"/></svg></span>
              <span class="tb g24"><svg><use href="#t-al"/></svg></span>
              <span class="tb"><svg><use href="#t-ac"/></svg></span>
              <span class="tb"><svg><use href="#t-ar"/></svg></span>
              <span class="tb"><svg><use href="#t-aj"/></svg></span>
              <span class="tb off g24"><svg><use href="#t-out"/></svg></span>
              <span class="tb"><svg><use href="#t-in"/></svg></span>
              <span class="split g28"><svg><use href="#t-num"/></svg><svg class="chev"><use href="#t-chev"/></svg></span>
              <span class="split g9"><svg><use href="#t-bul"/></svg><svg class="chev"><use href="#t-chev"/></svg></span>
              <span class="split g32"><svg><use href="#t-color"/></svg><svg class="chev"><use href="#t-chev"/></svg></span>
              <span class="split g8"><svg><use href="#t-high"/></svg><svg class="chev"><use href="#t-chev"/></svg></span>
              <span class="tb g4"><svg><use href="#t-clear"/></svg></span>
              <span class="tb g22"><svg><use href="#t-omega"/></svg></span>
              <span class="tb g24"><svg><use href="#t-full"/></svg></span>
              <span class="tb"><svg><use href="#t-prev"/></svg></span>
              <span class="tb"><svg><use href="#t-print"/></svg></span>
              <span class="tb g24"><svg><use href="#t-media"/></svg></span>
              <span class="tb"><svg><use href="#t-link"/></svg></span>
              <span class="tb"><svg><use href="#t-mark"/></svg></span>
              <span class="tb"><svg><use href="#t-code"/></svg></span>
              <span class="tb off g24"><svg><use href="#t-tbl"/></svg></span>
              <span class="tb off"><svg><use href="#t-tdel"/></svg></span>
              <span class="tb off g23"><svg><use href="#t-rup"/></svg></span>
              <span class="tb off"><svg><use href="#t-rdn"/></svg></span>
              <span class="tb off"><svg><use href="#t-rdel"/></svg></span>
              <span class="tb off g23"><svg><use href="#t-cl"/></svg></span>
              <span class="tb off"><svg><use href="#t-cr"/></svg></span>
              <span class="tb off"><svg><use href="#t-cdel"/></svg></span>
              <span class="tb"><svg><use href="#t-code"/></svg></span>
            </div>
          </div>
          <div class="ed-body">
            <article class="doc">
              <p><strong>Fashion EzyPlatform</strong> luôn mong muốn mang đến cho khách hàng trải nghiệm mua sắm thời trang trực tuyến <strong>an toàn, tiện lợi và hài lòng</strong>. Vì vậy, chúng tôi xây dựng <strong>chính sách bảo hành và đổi trả rõ ràng</strong> nhằm bảo vệ quyền lợi của khách hàng trong quá trình mua sắm trên nền tảng.</p>
              <p>Bài viết dưới đây sẽ giúp bạn hiểu rõ các quy định về <strong>bảo hành, đổi trả sản phẩm và quy trình xử lý</strong> khi phát sinh vấn đề sau khi nhận hàng.</p>
              <h2>1. Điều kiện áp dụng đổi trả</h2>
              <p>Khách hàng có thể yêu cầu đổi trả sản phẩm trong các trường hợp sau:</p>
              <ul>
                <li><strong>Sản phẩm bị lỗi do nhà sản xuất.</strong></li>
                <li><strong>Sản phẩm bị rách, hỏng hoặc có dấu hiệu hư hỏng khi nhận hàng.</strong></li>
                <li><strong>Giao sai sản phẩm</strong> so với đơn hàng đã đặt.</li>
                <li>Sản phẩm <strong>không đúng kích thước (size) hoặc màu sắc</strong> như mô tả trên website.</li>
              </ul>
              <p>Để được hỗ trợ đổi trả, khách hàng cần giữ nguyên tình trạng sản phẩm ban đầu.</p>
              <h2>2. Điều kiện sản phẩm khi đổi trả</h2>
              <p>Sản phẩm cần đáp ứng các điều kiện sau:</p>
              <ul>
                <li><strong>Còn nguyên tem và nhãn mác.</strong></li>
                <li><strong>Chưa qua sử dụng hoặc giặt tẩy.</strong></li>
                <li>Không bị bẩn, rách hoặc có dấu hiệu đã sử dụng.</li>
                <li><strong>Còn đầy đủ bao bì, phụ kiện</strong> (nếu có).</li>
                <li>Có <strong>hóa đơn hoặc thông tin đơn hàng xác nhận</strong>.</li>
              </ul>
              <h2>3. Thời gian đổi trả</h2>
            </article>
            <div class="scroll"><span class="scroll-up"></span><span class="scroll-thumb"></span></div>
            <svg class="grammarly" viewBox="0 0 30 30"><path d="M15 1a14 14 0 0 1 14 14c0 7.700-6.300 14-14 14H1V15A14 14 0 0 1 15 1z" fill="#fff" stroke="#d5d9e0"/><path d="M15 4a11 11 0 0 1 0 22H4V15A11 11 0 0 1 15 4z" fill="#027e6f"/><path d="M20.500 11.500a7 7 0 1 0 .5 4.500h-6" fill="none" stroke="#fff" stroke-width="2"/></svg>
          </div>
          <div class="statusbar">
            <span class="st-path">p</span>
            <span class="st-help">Nhấn Alt+0 để được trợ giúp</span>
            <span class="st-count">480 chữ</span>
            <svg class="st-grip" viewBox="0 0 10 10"><path d="M9 1L1 9M9 5L5 9" stroke="#8a9099" stroke-width="1.200"/></svg>
          </div>
        </div>

        <aside class="panel">
          <div class="pn"><span class="pn-ic"><svg><use href="#imagesolid"/></svg></span><span class="pn-t">Ảnh đặc trưng</span><svg class="pn-caret"><use href="#angleleft"/></svg></div>
          <div class="pn"><span class="pn-ic"><svg><use href="#youtube"/></svg></span><span class="pn-t">Video</span><svg class="pn-caret"><use href="#angleleft"/></svg></div>
          <div class="pn"><span class="pn-ic"><svg><use href="#volume"/></svg></span><span class="pn-t">Âm thanh</span><svg class="pn-caret"><use href="#angleleft"/></svg></div>
          <div class="pn"><span class="pn-ic"><svg><use href="#hash"/></svg></span><span class="pn-t">Các thuật ngữ</span><svg class="pn-caret"><use href="#angleleft"/></svg></div>
          <div class="pn"><span class="pn-ic"><svg><use href="#diagram"/></svg></span><span class="pn-t">Bài viết cha</span><svg class="pn-caret"><use href="#angleleft"/></svg></div>
          <div class="pn"><span class="pn-ic"><svg><use href="#language"/></svg></span><span class="pn-t">Ngôn ngữ</span><svg class="pn-caret"><use href="#angleleft"/></svg></div>
          <div class="pn"><span class="pn-ic"><svg><use href="#sort"/></svg></span><span class="pn-t">Độ ưu tiên</span><svg class="pn-caret"><use href="#angleleft"/></svg></div>
          <div class="pn"><span class="pn-ic"><svg><use href="#comment"/></svg></span><span class="pn-t">Bình luận</span><svg class="pn-caret"><use href="#angleleft"/></svg></div>
          <div class="pn"><span class="pn-ic"><svg><use href="#asterisk"/></svg></span><span class="pn-t">Loại bài viết</span><svg class="pn-caret"><use href="#angleleft"/></svg></div>
          <div class="pn tight"><span class="pn-ic"><svg><use href="#th"/></svg></span><span class="pn-t">Kiểu nội dung</span><svg class="pn-caret"><use href="#angleleft"/></svg></div>
          <div class="pn"><span class="pn-ic"><svg><use href="#user"/></svg></span><span class="pn-t">Tác giả</span><svg class="pn-caret"><use href="#angleleft"/></svg></div>
          <div class="pn"><span class="pn-ic"><svg><use href="#calcheck"/></svg></span><span class="pn-t">Thời gian xuất bản</span><svg class="pn-caret"><use href="#angleleft"/></svg></div>
          <div class="pn"><span class="pn-ic"><svg><use href="#newspaper"/></svg></span><span class="pn-t">Trình soạn thảo</span><svg class="pn-caret"><use href="#angleleft"/></svg></div>
        </aside>
      </div>
    </section>
  </main>
</div>
</body>
</html>
```
FILE: styles.css
```css
* { box-sizing: border-box; }
html, body { margin: 0; height: 100%; overflow: hidden; }
body { font-family: "Lato", "Noto Sans", sans-serif; font-size: 16px; color: #212529; background: #f4f6f9; }
.sprite { display: none; }
svg { fill: currentColor; display: block; }

.app { display: flex; height: 954px; }

/* sidebar */
.sidebar { width: 247px; flex: none; background: #343a40; color: #c2c7d0; box-shadow: 0 14px 28px rgba(0,0,0,.25), 0 10px 10px rgba(0,0,0,.22); overflow: hidden; position: relative; z-index: 2; letter-spacing: -.35px; }
.brand { height: 57px; border-bottom: 1px solid #4b545c; display: flex; align-items: center; padding-left: 19px; }
.logo { width: 32px; height: 32px; margin-top: -2px; filter: drop-shadow(0 3px 4px rgba(0,0,0,.5)); }
.brand-text { margin-left: 8px; font-size: 20px; color: rgba(255,255,255,.8); font-weight: 300; letter-spacing: -.4px; }
.brand-up { width: 20px; height: 20px; margin-left: 5px; margin-top: -2px; }
.user-panel { height: 67px; margin: 0 8px 0 5px; border-bottom: 1px solid #4f5962; display: flex; align-items: center; padding-left: 13px; }
.avatar { width: 33px; height: 34px; border-radius: 50%; background: #ff6d00; color: #fff; font-size: 20px; display: flex; align-items: center; justify-content: center; letter-spacing: 0; }
.user-name { margin-left: 11px; white-space: nowrap; }
.nav { padding-top: 16px; display: flex; flex-direction: column; gap: 3.2px; }
.nav-link { height: 40px; margin: 0 8px 0 5px; padding: 0 16px 1px 19px; display: flex; align-items: center; border-radius: 4px; color: #c2c7d0; white-space: nowrap; flex: none; }
.nav-ic { width: 22px; height: 20px; margin-right: 8px; display: flex; align-items: center; justify-content: center; flex: none; }
.nav-ic svg { width: 22px; height: 19px; }
.caret { width: 7px; height: 12px; margin-left: auto; margin-top: -3px; margin-right: -1px; }
.caret-down { width: 12px; height: 8px; margin-left: auto; margin-top: -3px; margin-right: -2px; color: #fff; }
.nav-link.open { background: rgba(255,255,255,.1); color: #fff; }
.nav-link.sub { margin-left: 21px; }
.nav-link.current { background: rgba(255,255,255,.9); color: #343a40; }
.badge { margin-left: auto; width: 16px; height: 18px; background: #17a2b8; color: #fff; border-radius: 3px; font-size: 12px; font-weight: 700; display: flex; align-items: center; justify-content: center; letter-spacing: 0; }

/* main */
.main { flex: 1; min-width: 0; display: flex; flex-direction: column; }
.topbar { height: 57px; flex: none; background: #fff; border-bottom: 1px solid #dee2e6; display: flex; align-items: center; padding-left: 24px; padding-right: 23px; }
.top-bars { width: 14px; height: 16px; color: #777; }
.top-link { color: #8c8c8c; font-size: 15px; }
.top-link.first { margin-left: 32px; margin-right: 33px; }
.top-icons { margin-left: auto; display: flex; align-items: center; gap: 32px; color: #777; }
.top-icons svg { width: 16px; height: 16px; }
.top-icons svg.wide { width: 18px; height: 16px; margin: 0 -1px; }

.content { flex: 1; min-height: 0; display: flex; flex-direction: column; padding: 0 15px 0 16px; }
.page-head { height: 81px; flex: none; display: flex; justify-content: space-between; padding-top: 13px; }
.page-title { margin: 0; font-size: 28.8px; font-weight: 400; line-height: 36px; color: #212529; letter-spacing: -.4px; }
.crumbs { font-size: 16px; color: #6c757d; padding-top: 7px; letter-spacing: -.35px; }
.crumb-link { color: #007bff; }
.crumb-sep { margin: 0 8px; }

.title-bar { height: 42px; flex: none; display: flex; background: #e4e7eb; padding: 2px; }
.publish { width: 85px; border: 0; padding: 0; background: #28a745; color: #fff; font: inherit; letter-spacing: -.35px; }
.title-input { flex: 1; margin: -1px 2px -1px 2px; background: #fff; display: flex; align-items: center; padding-left: 7px; font-size: 16px; color: #212529; padding-bottom: 1px; letter-spacing: -.43px; }
.misspelt { text-decoration: underline wavy #f02; text-decoration-thickness: 1px; text-underline-offset: 3px; }
.tool-btn { border: 0; padding: 0; display: flex; align-items: center; justify-content: center; background: #f4f6f9; }
.tool-btn svg { width: 16px; height: 18px; }
.tool-btn.save { width: 45px; color: #1f2d3d; margin-right: 1px; }
.tool-btn.eye { width: 47px; color: #6c757d; margin-right: 2px; }
.tool-btn.eye svg { width: 20px; height: 16px; }
.tool-btn.gear { width: 42px; background: #000; color: #fff; }

.work { flex: 1; min-height: 0; display: flex; padding-top: 8px; }
.editor { flex: 1; min-width: 0; margin: 2px 2px 18px 2px; background: #fff; border-radius: 10px; display: flex; flex-direction: column; overflow: hidden; box-shadow: 0 0 2px rgba(34,47,62,.2); }
.ed-head { height: 88px; flex: none; box-shadow: 0 2px 2px -2px rgba(34,47,62,.2), 0 8px 8px -4px rgba(34,47,62,.07); position: relative; z-index: 1; }
.menubar { height: 46px; padding: 13px 0 0 20px; display: flex; font-family: "Noto Sans", sans-serif; font-size: 13.2px; color: #222f3e; line-height: 20px; }
.mi { margin-right: 17px; white-space: nowrap; }
.toolbar { display: flex; align-items: center; height: 34px; padding-left: 10px; color: #222f3e; }
.tb { width: 35px; height: 24px; flex: none; display: flex; justify-content: center; }
.tb svg, .split svg { width: 24px; height: 24px; flex: none; }
.tb.off { color: #9ca2a9; }
.split { display: flex; align-items: center; flex: none; gap: 7px; width: 43px; }
.split .chev { width: 12px; height: 12px; color: #9aa0a7; }
.g2 { margin-left: 2px; } .g4 { margin-left: 4.500px; } .g8 { margin-left: 8px; } .g9 { margin-left: 9px; } .g22 { margin-left: 22px; } .g23 { margin-left: 23.500px; } .g24 { margin-left: 24px; } .g28 { margin-left: 28.500px; } .g32 { margin-left: 32px; }

.ed-body { flex: 1; min-height: 0; position: relative; overflow: hidden; }
.doc { padding: 16px 37px 0 16px; font-family: "Noto Sans", sans-serif; font-size: 15px; line-height: 22.400px; color: #000; }
.doc strong { letter-spacing: .09px; }
.doc p { margin: 0 0 16.500px; }
.doc h2 { font-size: 23.200px; line-height: 32px; font-weight: 700; margin: 22px 0 19px; }
.doc ul { margin: 0 0 16.500px; padding-left: 40px; }
.scroll { position: absolute; top: 0; right: 3px; width: 9px; height: 100%; }
.scroll-up { position: absolute; top: 9px; left: 0; border: 4.500px solid transparent; border-top: 0; border-bottom: 6px solid #8b8b8b; }
.scroll-thumb { position: absolute; top: 18px; left: 0; width: 9px; height: 291px; background: #8b8b8b; border-radius: 4px; }
.grammarly { position: absolute; right: 0; bottom: 0; width: 30px; height: 30px; }

.statusbar { height: 25px; flex: none; border-top: 1px solid #e2e3e6; display: flex; align-items: center; position: relative; font-family: "Noto Sans", sans-serif; font-size: 13.500px; color: rgba(34,47,62,.7); padding: 0 3px 0 8px; }
.st-help { position: absolute; left: 0; right: 12px; text-align: center; }
.st-count { margin-left: auto; position: relative; }
.st-grip { width: 10px; height: 10px; margin-left: 4px; position: relative; }

.panel { width: 200px; flex: none; border: 1px solid #dee2e6; border-bottom: 0; border-top: 1px solid #e4e7eb; padding: 0 8px; color: #007bff; letter-spacing: -.25px; }
.pn { height: 41px; border-bottom: 1px solid #dee2e6; display: flex; align-items: center; font-size: 16px; white-space: nowrap; }
.pn.tight { height: 45px; }
.pn-ic { width: 22px; flex: none; display: flex; justify-content: center; margin-right: 10px; }
.pn-ic svg { width: 20px; height: 18px; }
.pn.tight .pn-ic { width: 15px; margin-right: 7px; }
.pn.tight .pn-ic svg { width: 15px; height: 15px; }
.pn-caret { width: 7px; height: 12px; margin-left: auto; margin-right: 0; margin-top: -2px; }
```
